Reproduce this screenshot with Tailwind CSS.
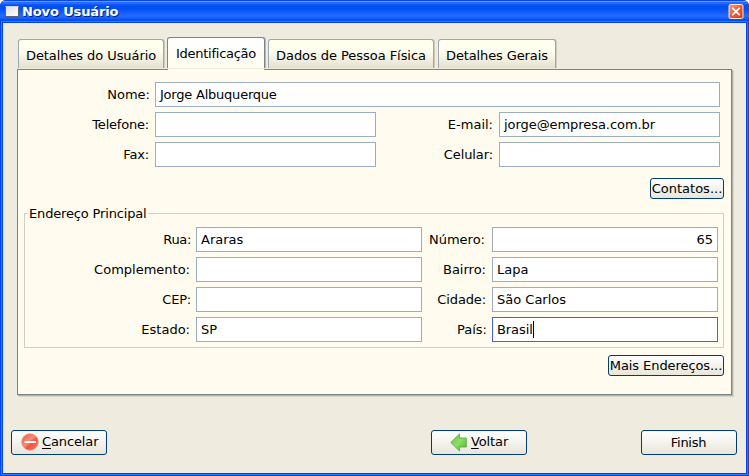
<!DOCTYPE html>
<html lang="pt-BR">
<head>
<meta charset="utf-8">
<title>Novo Usuário</title>
<script src="https://cdn.jsdelivr.net/npm/@tailwindcss/browser@4"></script>
</head>
<body class="w-[749px] h-[476px] overflow-hidden bg-white font-['DejaVu_Sans',sans-serif] text-[13px] leading-[15px] text-black">
<div class="flex h-[476px] w-[749px] flex-col overflow-hidden rounded-t-[6px] bg-[#0046ee]">
  <header class="flex h-[23px] shrink-0 items-center justify-between bg-[linear-gradient(to_bottom,#0046e8_0,#0046e8_1px,#6399ff_1px,#6399ff_2px,#2b6cff_2px,#2768ff_4px,#0050f4_5px,#0050f8_9px,#2368ff_15px,#2368ff_17px,#0050f8_20px,#003edc_23px)] px-[5px]">
    <div class="flex items-center">
      <span class="mr-[3px] h-[11px] w-[14px] border border-[#59616e] border-t-[#c8d8f4] bg-linear-to-br from-[#dedede] to-white"></span>
      <h1 class="text-[13px] font-bold leading-[15px] tracking-[-0.12px] text-white [text-shadow:1px_1px_0_#002080]">Novo Usuário</h1>
    </div>
    <svg class="-mt-px h-[16px] w-[16px]" viewBox="0 0 16 16">
      <defs><linearGradient id="cl" x1="0" y1="0" x2="1" y2="1"><stop offset="0" stop-color="#ff9b7b"/><stop offset=".5" stop-color="#f05a30"/><stop offset="1" stop-color="#d83a10"/></linearGradient></defs>
      <rect x="1" y="1.500" width="14" height="14" rx="1.500" fill="url(#cl)" stroke="#ffe6dc"/>
      <path d="M4.300 4.800 11.700 12.200M11.700 4.800 4.300 12.200" stroke="#fff" stroke-width="1.700"/>
    </svg>
  </header>
  <main class="mx-[3px] mb-[3px] flex grow flex-col bg-[#efebdf] shadow-[0_0_0_1px_#0044e8,0_0_0_2px_#2f78ff]">
    <nav class="relative z-10 ml-[15px] mt-[15px] flex h-[31px] items-end">
      <div class="mb-px mr-[3px] h-[29px] w-[146px] rounded-t-[3px] border border-b-0 border-[#9aa9b0] bg-linear-to-b from-[#fffff0] from-40% to-[#e4e0d0] pl-[7px] pt-[8px] tracking-[-0.08px] shadow-[1px_0_0_#cfcabc] whitespace-nowrap">Detalhes do Usuário</div>
      <div class="mr-[3px] h-[32px] w-[98px] rounded-t-[3px] border border-b-0 border-[#778488] bg-linear-to-b from-white to-[#fffbee] pl-[8px] pt-[8px] tracking-[-0.26px] shadow-[1px_0_0_#bdbab0] [clip-path:inset(0_-2px_1px_0)] whitespace-nowrap">Identificação</div>
      <div class="mb-px mr-[4px] h-[29px] w-[166px] rounded-t-[3px] border border-b-0 border-[#9aa9b0] bg-linear-to-b from-[#fffff0] from-40% to-[#e4e0d0] pl-[7px] pt-[8px] tracking-[-0.05px] shadow-[1px_0_0_#cfcabc] whitespace-nowrap">Dados de Pessoa Física</div>
      <div class="mb-px h-[29px] w-[118px] rounded-t-[3px] border border-b-0 border-[#9aa9b0] bg-linear-to-b from-[#fffff0] from-40% to-[#e4e0d0] pl-[7px] pt-[8px] tracking-[-0.12px] shadow-[1px_0_0_#cfcabc] whitespace-nowrap">Detalhes Gerais</div>
    </nav>
    <section class="ml-[14px] flex h-[326px] w-[715px] flex-col border border-[#778488] bg-[#fffbee] pl-[6px] pt-[12px] shadow-[1px_1px_0_#b6b1a5,2px_2px_0_#d9d4c8]">
      <div class="-mt-[13px] mb-[12px] ml-[144px] h-px w-[96px] shrink-0 bg-[#fffbee]"></div>
      <div class="flex flex-col gap-[5px]">
        <div class="flex h-[25px]">
          <div class="w-[131px] pr-[5px] pt-[5px] text-right">Nome:</div>
          <div class="w-[565px] border border-[#9badbe] bg-white pl-[4px] pt-[4px] tracking-[-0.22px]">Jorge Albuquerque</div>
        </div>
        <div class="flex h-[25px]">
          <div class="w-[131px] pr-[6px] pt-[5px] text-right tracking-[-0.2px]">Telefone:</div>
          <div class="w-[221px] border border-[#9badbe] bg-white"></div>
          <div class="w-[123px] pr-[6px] pt-[5px] text-right">E-mail:</div>
          <div class="w-[221px] border border-[#9badbe] bg-white pl-[4px] pt-[4px] tracking-[-0.06px]">jorge@empresa.com.br</div>
        </div>
        <div class="flex h-[25px]">
          <div class="w-[131px] pr-[6px] pt-[5px] text-right tracking-[-0.15px]">Fax:</div>
          <div class="w-[221px] border border-[#9badbe] bg-white"></div>
          <div class="w-[123px] pr-[6px] pt-[5px] text-right tracking-[-0.1px]">Celular:</div>
          <div class="w-[221px] border border-[#9badbe] bg-white"></div>
        </div>
      </div>
      <button class="ml-[626px] mt-[11px] flex h-[21px] w-[74px] shrink-0 items-center justify-center rounded-[3px] border border-[#003c74] bg-linear-to-b from-white to-[#e8e5d9] whitespace-nowrap">Contatos...</button>
      <div class="relative mt-[14px] flex h-[135px] w-[700px] shrink-0 flex-col gap-[5px] border border-[#d0d0bf] pt-[13px]">
        <div class="absolute left-[2px] top-[-8px] bg-[#fffbee] pl-[2px] pr-[1px] tracking-[-0.16px] whitespace-nowrap">Endereço Principal</div>
        <div class="flex h-[25px]">
          <div class="w-[171px] pr-[5px] pt-[5px] text-right tracking-[-0.35px]">Rua:</div>
          <div class="w-[226px] border border-[#9badbe] bg-white pl-[4px] pt-[4px]">Araras</div>
          <div class="w-[70px] pr-[7px] pt-[5px] text-right">Número:</div>
          <div class="w-[226px] border border-[#9badbe] bg-white pr-[4px] pt-[4px] text-right">65</div>
        </div>
        <div class="flex h-[25px]">
          <div class="w-[171px] pr-[6px] pt-[5px] text-right">Complemento:</div>
          <div class="w-[226px] border border-[#9badbe] bg-white"></div>
          <div class="w-[70px] pr-[6px] pt-[5px] text-right">Bairro:</div>
          <div class="w-[226px] border border-[#9badbe] bg-white pl-[4px] pt-[4px]">Lapa</div>
        </div>
        <div class="flex h-[25px]">
          <div class="w-[171px] pr-[5px] pt-[5px] text-right tracking-[-0.2px]">CEP:</div>
          <div class="w-[226px] border border-[#9badbe] bg-white"></div>
          <div class="w-[70px] pr-[6px] pt-[5px] text-right tracking-[-0.12px]">Cidade:</div>
          <div class="w-[226px] border border-[#9badbe] bg-white pl-[4px] pt-[4px]">São Carlos</div>
        </div>
        <div class="flex h-[25px]">
          <div class="w-[171px] pr-[6px] pt-[5px] text-right">Estado:</div>
          <div class="w-[226px] border border-[#9badbe] bg-white pl-[4px] pt-[4px]">SP</div>
          <div class="w-[70px] pr-[5px] pt-[5px] text-right">País:</div>
          <div class="flex w-[226px] border border-[#4560ec] bg-white pl-[4px] pt-[4px]"><span class="w-[35.500px] tracking-[-0.08px]">Brasil</span><span class="-mt-px h-[17px] w-px bg-black"></span></div>
        </div>
      </div>
      <button class="ml-[584px] mt-[7px] flex h-[21px] w-[116px] shrink-0 items-center justify-center rounded-[3px] border border-[#003c74] bg-linear-to-b from-white to-[#e8e5d9] tracking-[-0.08px] whitespace-nowrap">Mais Endereços...</button>
    </section>
    <footer class="mt-[35px] flex pl-[8px]">
      <button class="flex h-[25px] w-[96px] items-center rounded-[3px] border border-[#003c74] bg-linear-to-b from-white to-[#e8e5d9] pb-[2px] pl-[9px]">
        <svg class="mr-[3px] mt-px h-[18px] w-[18px]" viewBox="0 0 18 18">
          <defs><linearGradient id="rd" x1="0" y1="0" x2="1" y2="1"><stop offset="0" stop-color="#e85a4c"/><stop offset=".45" stop-color="#ff8a74"/><stop offset=".6" stop-color="#f4513c"/><stop offset="1" stop-color="#ff8068"/></linearGradient></defs>
          <circle cx="9" cy="9" r="8.200" fill="url(#rd)" stroke="#d88a80" stroke-width=".8"/>
          <rect x="3.500" y="8" width="11.500" height="2" fill="#fff"/>
        </svg>
        <span class="tracking-[-0.12px]"><span class="underline decoration-1 underline-offset-2">C</span>ancelar</span>
      </button>
      <button class="ml-[324px] flex h-[25px] w-[96px] items-center rounded-[3px] border border-[#003c74] bg-linear-to-b from-white to-[#e8e5d9] pb-[2px] pl-[18px]">
        <svg class="mr-[4px] mt-[2px] h-[19px] w-[17px]" viewBox="0 0 17 19">
          <defs><linearGradient id="gr" x1="0" y1="0" x2="1" y2="1"><stop offset="0" stop-color="#6cb850"/><stop offset=".5" stop-color="#8be060"/><stop offset="1" stop-color="#48b820"/></linearGradient></defs>
          <path d="M.8 9.500 9.500.9V5H16.300V14H9.500V18Z" fill="url(#gr)" stroke="#68a850" stroke-width=".9"/>
        </svg>
        <span class="tracking-[-0.12px]"><span class="underline decoration-1 underline-offset-2">V</span>oltar</span>
      </button>
      <button class="ml-[114px] flex h-[25px] w-[96px] items-center justify-center rounded-[3px] border border-[#003c74] bg-linear-to-b from-white to-[#e8e5d9] pr-px tracking-[-0.25px]">Finish</button>
    </footer>
  </main>
</div>
</body>
</html>
